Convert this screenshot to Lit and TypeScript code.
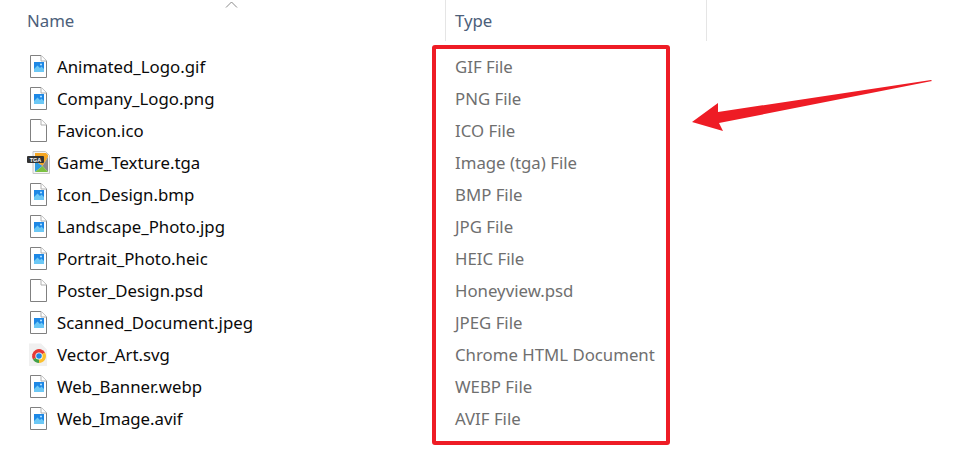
import { LitElement, html, css, svg } from "lit";
import { customElement } from "lit/decorators.js";

type Kind = "img" | "blank" | "tga" | "chrome";
const FILES: [string, string, Kind][] = [
  ["Animated_Logo.gif", "GIF File", "img"],
  ["Company_Logo.png", "PNG File", "img"],
  ["Favicon.ico", "ICO File", "blank"],
  ["Game_Texture.tga", "Image (tga) File", "tga"],
  ["Icon_Design.bmp", "BMP File", "img"],
  ["Landscape_Photo.jpg", "JPG File", "img"],
  ["Portrait_Photo.heic", "HEIC File", "img"],
  ["Poster_Design.psd", "Honeyview.psd", "blank"],
  ["Scanned_Document.jpeg", "JPEG File", "img"],
  ["Vector_Art.svg", "Chrome HTML Document", "chrome"],
  ["Web_Banner.webp", "WEBP File", "img"],
  ["Web_Image.avif", "AVIF File", "img"],
];

const page = svg`<path d="M1.5.5H12L17.5 6V22.5H1.5Z" fill="#fff" stroke="#808080"/><path d="M12 .5V6H17.5" fill="#fff" stroke="#b0b0b0"/>`;

const icon = (k: Kind) => {
  if (k === "blank") return html`<svg class="ico" viewBox="0 0 18 24">${page}</svg>`;
  if (k === "img")
    return html`<svg class="ico" viewBox="0 0 18 24">${page}
      <rect x="5" y="7" width="10" height="10" fill="#1e88e5"/>
      <path d="M5 17V14L8.5 10.5L11 13L12.5 11.5L15 14V17Z" fill="#6cc8f5"/>
      <circle cx="12" cy="9.4" r="1" fill="#bfe8ff"/></svg>`;
  if (k === "tga")
    return html`<svg class="ico tga" viewBox="0 0 24 24">
      <path d="M6 .5H18.5L22.5 4.5V22.5H6Z" fill="#f4f4f4" stroke="#c8c8c8"/>
      <path d="M8 2H19L21 4V6L15.5 15L8 10Z" fill="#f5a623"/>
      <path d="M8 10L15.5 15L8 21Z" fill="#2f9ae0"/>
      <path d="M21 6V21L15.5 15Z" fill="#8a8a8a"/>
      <path d="M8 21L15.5 15L21 21Z" fill="#7cc142"/>
      <rect x="0" y="5" width="17" height="7" rx="1" fill="#333"/>
      <text x="8.5" y="10.6" class="tgat" text-anchor="middle">TGA</text></svg>`;
  return html`<svg class="ico chrome" viewBox="0 0 20 24">
    <path d="M0 .5H12L18 6.5V23H0Z" fill="#f0f0f0"/>
    <path d="M10 13L3.94 16.5A7 7 0 0 1 16.06 9.5Z" fill="#e53935"/>
    <path d="M10 13L16.06 9.5A7 7 0 0 1 10 20Z" fill="#fbc02d"/>
    <path d="M10 13L10 20A7 7 0 0 1 3.94 16.5Z" fill="#43a047"/>
    <circle cx="10" cy="13" r="3.6" fill="#fff"/><circle cx="10" cy="13" r="2.8" fill="#1e88e5"/></svg>`;
};

@customElement("app-root")
export class AppRoot extends LitElement {
  static styles = css`
    :host { display: block; position: relative; width: 960px; height: 462px; background: #fff; overflow: hidden;
      font-family: "Noto Sans", "Open Sans", sans-serif; font-size: 16.8px; }
    .head { display: grid; grid-template-columns: 445px 261px 1px; height: 41px; }
    .hc { position: relative; padding-top: 9px; line-height: 24px; color: #4c607a; }
    .hc.name { padding-left: 27px; }
    .hc.type { padding-left: 9px; border-left: 1px solid #e5e5e5; }
    .end { background: #e5e5e5; }
    .chev { position: absolute; left: 225px; top: 1px; width: 13px; height: 7px; }
    .rows { padding-top: 10px; display: grid; grid-template-columns: 455px 1fr; grid-auto-rows: 32px; }
    .n { display: flex; align-items: center; padding-left: 29px; color: #0a0a0a; gap: 10px; white-space: nowrap; }
    .t { display: flex; align-items: center; color: #6f6f6f; white-space: nowrap; }
    .lbl { margin-bottom: 2px; }
    .ico { width: 18px; height: 24px; flex: none; }
    .ico.tga { width: 24px; height: 24px; margin-left: -2px; margin-right: -4px; }
    .ico.chrome { width: 20px; height: 24px; margin-right: -2px; }
    .tgat { font: bold 5.5px "Liberation Sans", sans-serif; fill: #fff; }
    .box { position: absolute; left: 432px; top: 45px; width: 238px; height: 400px; box-sizing: border-box;
      border: 4px solid #ee1c25; border-radius: 3px; }
    .arrow { position: absolute; left: 680px; top: 70px; width: 260px; height: 70px; }
  `;
  render() {
    return html`
      <div class="head">
        <div class="hc name">Name
          <svg class="chev" viewBox="0 0 13 7"><path d="M1 6.5L6.5 1L12 6.5" fill="none" stroke="#8a8a8a"/></svg>
        </div>
        <div class="hc type">Type</div>
        <div class="end"></div>
      </div>
      <div class="rows">
        ${FILES.map(([n, t, k]) => html`<div class="n">${icon(k)}<span class="lbl">${n}</span></div><div class="t"><span class="lbl">${t}</span></div>`)}
      </div>
      <div class="box"></div>
      <svg class="arrow" viewBox="680 70 260 70"><path d="M692 122L718 103L718 112L931 80L932 81L719 123L723 131Z" fill="#ee1c25"/></svg>
    `;
  }
}
